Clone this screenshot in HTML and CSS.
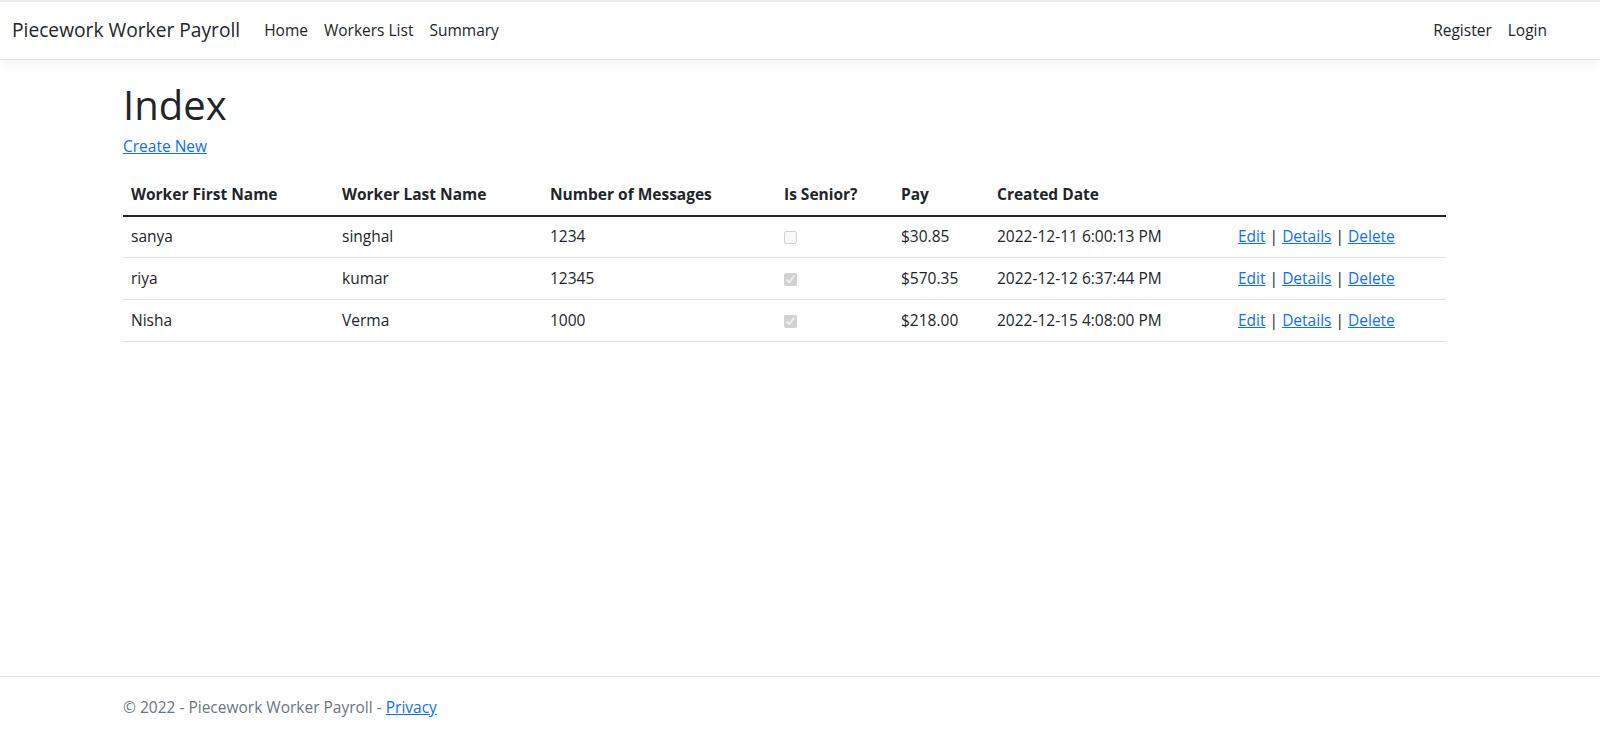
FILE: index.html
```html
<!DOCTYPE html>
<html lang="en">
<head>
<meta charset="utf-8">
<title>Index - Piecework Worker Payroll</title>
<link rel="stylesheet" href="styles.css">
</head>
<body>
<div class="page">
  <header class="navbar">
    <a class="brand" href="#">Piecework Worker Payroll</a>
    <ul class="nav">
      <li><a href="#">Home</a></li>
      <li><a href="#">Workers List</a></li>
      <li><a href="#">Summary</a></li>
    </ul>
    <ul class="nav nav-right">
      <li><a href="#">Register</a></li>
      <li><a href="#">Login</a></li>
    </ul>
  </header>
  <main class="container">
    <h1>Index</h1>
    <p class="create"><a href="#">Create New</a></p>
    <table class="table">
      <thead>
        <tr>
          <th class="c1">Worker First Name</th>
          <th class="c2">Worker Last Name</th>
          <th class="c3">Number of Messages</th>
          <th class="c4">Is Senior?</th>
          <th class="c5">Pay</th>
          <th class="c6">Created Date</th>
          <th class="c7"></th>
        </tr>
      </thead>
      <tbody>
        <tr>
          <td>sanya</td><td>singhal</td><td>1234</td>
          <td><input type="checkbox" disabled></td>
          <td>$30.85</td><td>2022-12-11 6:00:13 PM</td>
          <td><a href="#">Edit</a> | <a href="#">Details</a> | <a href="#">Delete</a></td>
        </tr>
        <tr>
          <td>riya</td><td>kumar</td><td>12345</td>
          <td><input type="checkbox" checked disabled></td>
          <td>$570.35</td><td>2022-12-12 6:37:44 PM</td>
          <td><a href="#">Edit</a> | <a href="#">Details</a> | <a href="#">Delete</a></td>
        </tr>
        <tr>
          <td>Nisha</td><td>Verma</td><td>1000</td>
          <td><input type="checkbox" checked disabled></td>
          <td>$218.00</td><td>2022-12-15 4:08:00 PM</td>
          <td><a href="#">Edit</a> | <a href="#">Details</a> | <a href="#">Delete</a></td>
        </tr>
      </tbody>
    </table>
  </main>
  <footer class="footer">
    <div class="footer-inner">&copy; 2022 - Piecework Worker Payroll - <a href="#">Privacy</a></div>
  </footer>
</div>
</body>
</html>
```

FILE: styles.css
```css
* { box-sizing: border-box; }
html, body { margin: 0; padding: 0; }
body {
  font-family: "Open Sans", "Noto Sans", sans-serif;
  font-size: 15.5px;
  line-height: 1.5;
  color: #212529;
  background: #fff;
}
a { color: #0d6efd; }
.page {
  min-height: 100vh;
  display: flex;
  flex-direction: column;
}
.navbar {
  display: flex;
  align-items: center;
  height: 60px;
  padding: 0 45px 0 12px;
  border-top: 2px solid #ececec;
  border-bottom: 1px solid #e3e3e3;
  box-shadow: 0 4px 12px rgba(0,0,0,0.05);
  background: #fff;
}
.brand {
  font-size: 19.2px;
  color: #212529;
  text-decoration: none;
  margin-right: 16px;
}
.nav {
  display: flex;
  list-style: none;
  margin: 0;
  padding: 0;
}
.nav a {
  display: block;
  padding: 8px 8px;
  color: #212529;
  text-decoration: none;
}
.nav-right { margin-left: auto; }
.container {
  width: 100%;
  padding: 0 154px 0 123px;
}
h1 {
  font-size: 40px;
  font-weight: 500;
  line-height: 1.2;
  margin: 21px 0 6px;
}
.create { margin: 0 0 17px; }
.table {
  width: 100%;
  border-collapse: collapse;
}
.table th, .table td {
  text-align: left;
  padding: 8px 8px;
}
.table th {
  font-weight: 700;
  border-bottom: 2px solid #212529;
  vertical-align: bottom;
}
.table td {
  border-bottom: 1px solid #dee2e6;
  height: 42px;
  vertical-align: middle;
}
.c1 { width: 211px; }
.c2 { width: 208px; }
.c3 { width: 234px; }
.c4 { width: 117px; }
.c5 { width: 96px; }
.c6 { width: 241px; }
input[type="checkbox"] { margin: 0; width: 13px; height: 13px; vertical-align: middle; }
.footer {
  margin-top: auto;
  border-top: 1px solid #dee2e6;
  color: #6c757d;
  line-height: 60px;
  height: 66px;
}
.footer-inner { padding-left: 123px; }
```
